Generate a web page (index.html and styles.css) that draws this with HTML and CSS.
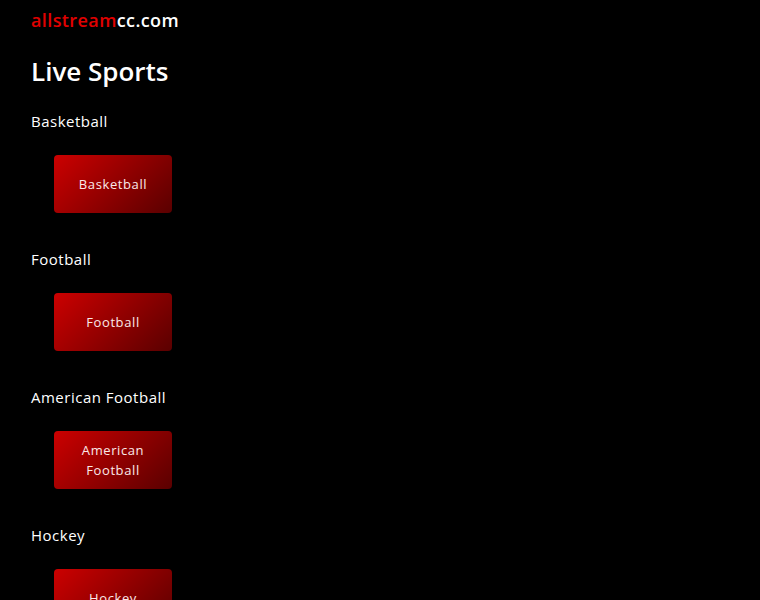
FILE: index.html
```html
<!DOCTYPE html>
<html lang="en">
<head>
    <meta charset="UTF-8">
    <meta name="viewport" content="width=device-width, initial-scale=1.0">
    <title>allstreamcc.com - Live Sports</title>
    <link rel="stylesheet" href="styles.css">
</head>
<body>

    <header class="site-header">
        <a href="#" class="logo"><span class="logo-red">allstream</span>cc.com</a>
    </header>

    <main>
        <h1>Live Sports</h1>

        <section class="sport">
            <h2>Basketball</h2>
            <div class="sport-links">
                <a href="#" class="sport-btn">Basketball</a>
            </div>
        </section>

        <section class="sport">
            <h2>Football</h2>
            <div class="sport-links">
                <a href="#" class="sport-btn">Football</a>
            </div>
        </section>

        <section class="sport">
            <h2>American Football</h2>
            <div class="sport-links">
                <a href="#" class="sport-btn">American Football</a>
            </div>
        </section>

        <section class="sport">
            <h2>Hockey</h2>
            <div class="sport-links">
                <a href="#" class="sport-btn">Hockey</a>
            </div>
        </section>
    </main>

</body>
</html>
```

FILE: styles.css
```css
body {
    margin: 0;
    padding: 0 31px;
    background: #000;
    color: #fff;
    font-family: 'Open Sans', 'Liberation Sans', sans-serif;
}

.site-header {
    height: 40px;
    display: flex;
    align-items: center;
}

.logo {
    color: #fff;
    text-decoration: none;
    font-size: 18px;
    font-weight: 600;
    letter-spacing: 0.4px;
}

.logo-red {
    color: #e00000;
}

h1 {
    margin: 12px 0 0;
    font-size: 26px;
    font-weight: 600;
    line-height: 38px;
}

.sport h2 {
    margin: 0;
    font-size: 15px;
    font-weight: 400;
    letter-spacing: 0.5px;
    line-height: 20px;
}

.sport:first-of-type h2 {
    margin-top: 21px;
}

.sport-links {
    display: flex;
    padding: 24px 23px 36px;
}

.sport-btn {
    width: 118px;
    height: 58px;
    display: flex;
    align-items: center;
    justify-content: center;
    text-align: center;
    padding: 0 10px;
    box-sizing: border-box;
    border-radius: 4px;
    background: linear-gradient(135deg, #cc0000, #5a0000);
    color: #fbe9e9;
    text-decoration: none;
    font-size: 13px;
    letter-spacing: 0.6px;
    line-height: 20px;
}
```
